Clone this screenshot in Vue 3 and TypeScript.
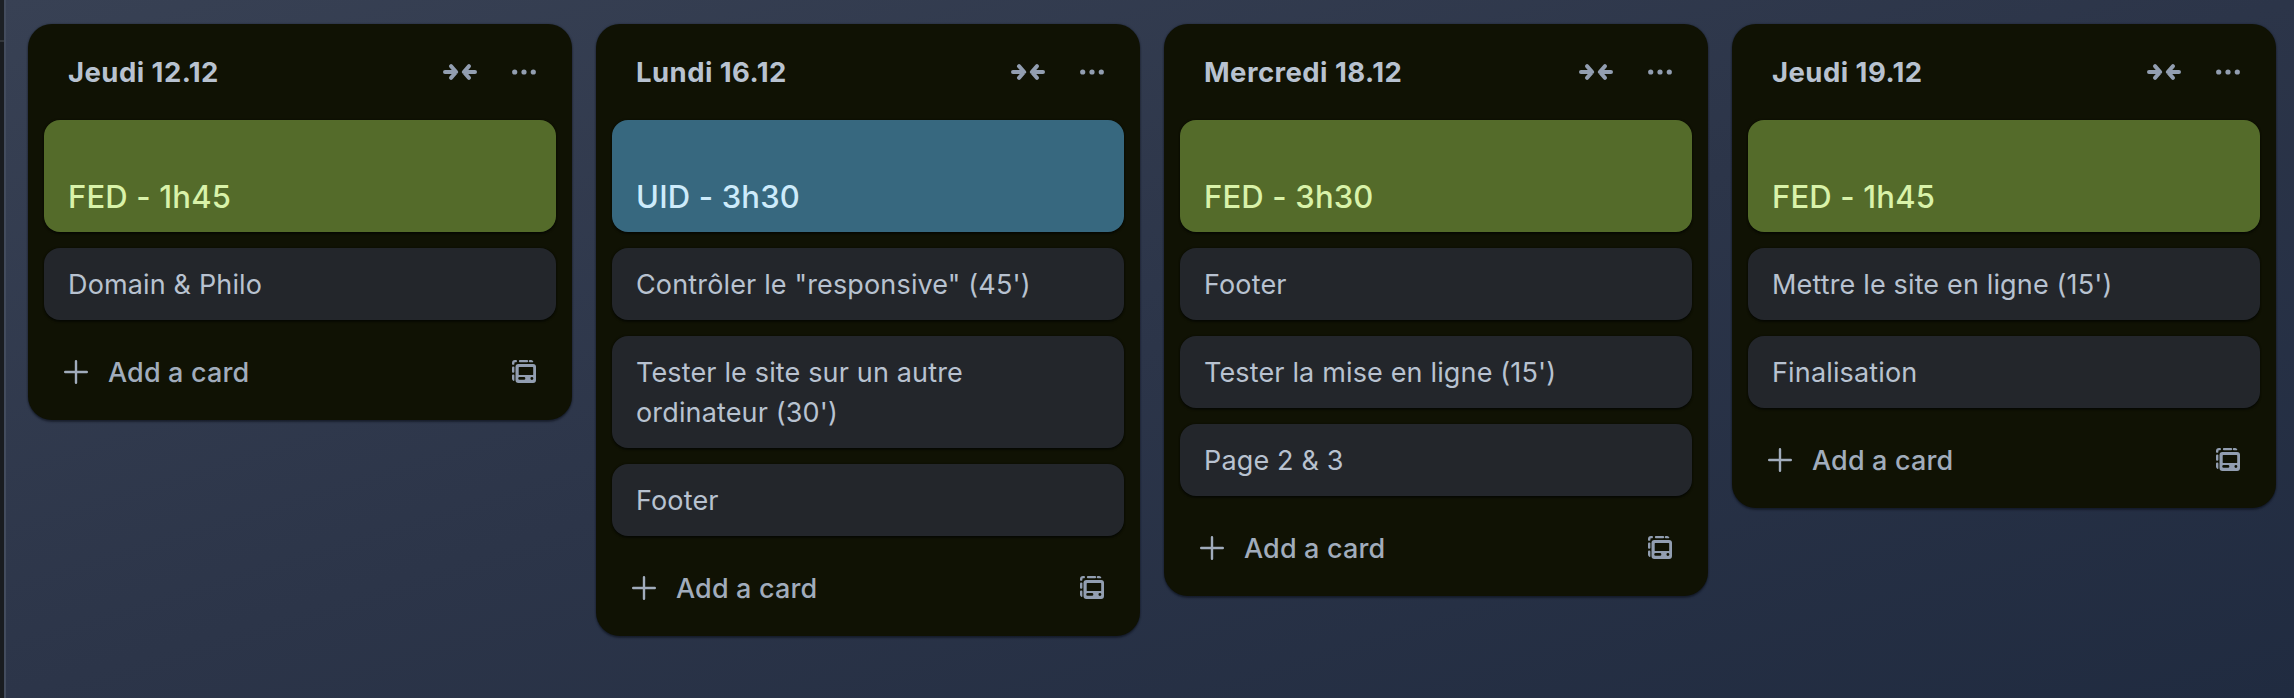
<script setup lang="ts">
interface Banner {
  label: string
  tone: 'lime' | 'sky'
}

interface BoardList {
  title: string
  banner: Banner
  cards: string[]
}

const lists: BoardList[] = [
  {
    title: 'Jeudi 12.12',
    banner: { label: 'FED - 1h45', tone: 'lime' },
    cards: ['Domain & Philo'],
  },
  {
    title: 'Lundi 16.12',
    banner: { label: 'UID - 3h30', tone: 'sky' },
    cards: ['Contrôler le "responsive" (45\')', "Tester le site sur un autre ordinateur (30')", 'Footer'],
  },
  {
    title: 'Mercredi 18.12',
    banner: { label: 'FED - 3h30', tone: 'lime' },
    cards: ['Footer', "Tester la mise en ligne (15')", 'Page 2 & 3'],
  },
  {
    title: 'Jeudi 19.12',
    banner: { label: 'FED - 1h45', tone: 'lime' },
    cards: ["Mettre le site en ligne (15')", 'Finalisation'],
  },
]
</script>

<template>
  <div class="app">
    <aside class="sidebar">
      <div class="sidebar-head"></div>
    </aside>
    <main class="board">
      <section v-for="list in lists" :key="list.title" class="list">
        <header class="list-head">
          <h2 class="list-title">{{ list.title }}</h2>
          <button class="icon-button" type="button" aria-label="Collapse list">
            <svg width="36" height="24" viewBox="0 0 36 24" fill="none" stroke="currentColor" stroke-width="4" stroke-linecap="round" stroke-linejoin="round">
              <path d="M3 12H14M9 6.2L14.2 12L9 17.8" />
              <path d="M33 12H22M27 6.2L21.8 12L27 17.8" />
            </svg>
          </button>
          <button class="icon-button" type="button" aria-label="List actions">
            <svg width="24" height="24" viewBox="0 0 24 24" fill="currentColor">
              <circle cx="2.7" cy="12" r="2.6" />
              <circle cx="12" cy="12" r="2.6" />
              <circle cx="21.3" cy="12" r="2.6" />
            </svg>
          </button>
        </header>

        <div class="cards">
          <article class="banner" :class="list.banner.tone">{{ list.banner.label }}</article>
          <article v-for="card in list.cards" :key="card" class="card">{{ card }}</article>
        </div>

        <footer class="list-foot">
          <button class="add" type="button">
            <svg width="24" height="24" viewBox="0 0 24 24" fill="none" stroke="currentColor" stroke-width="2.4" stroke-linecap="round">
              <path d="M12 1.2V22.8M1.2 12H22.8" />
            </svg>
            <span class="add-label">Add a card</span>
          </button>
          <button class="icon-button" type="button" aria-label="Create from template">
            <svg width="24" height="24" viewBox="0 0 24 24" fill="currentColor">
              <path d="M3 0H4.2A.7 .7 0 0 1 4.9 .7V1.6A.7 .7 0 0 1 4.2 2.3H3A.7 .7 0 0 0 2.4 3V4.1A.7 .7 0 0 1 1.7 4.8H.7A.7 .7 0 0 1 0 4.1V3A3 3 0 0 1 3 0Z" />
              <rect x="6.9" y="0" width="9.2" height="2.3" rx="1" />
              <path d="M17.9 0H19.2A2.3 2.3 0 0 1 21.3 1.5A.7 .7 0 0 1 20.7 2.3H17.9A.9 .9 0 0 1 17.9 0Z" />
              <rect x="0" y="6.6" width="2.4" height="6.1" rx="1" />
              <path d="M1 14.6H1.5A.9 .9 0 0 1 2.4 15.5V20.2A.7 .7 0 0 1 1.6 20.9A2.4 2.4 0 0 1 0 18.7V15.5A1 1 0 0 1 1 14.6Z" />
              <path
                fill-rule="evenodd"
                d="M6.4 3.9H21.1A2.9 2.9 0 0 1 24 6.8V20.1A2.9 2.9 0 0 1 21.1 23H6.4A2.9 2.9 0 0 1 3.5 20.1V6.8A2.9 2.9 0 0 1 6.4 3.9ZM7.3 6.9A.6 .6 0 0 0 6.7 7.5V14.5A.6 .6 0 0 0 7.3 15.1H20.6A.6 .6 0 0 0 21.2 14.5V7.5A.6 .6 0 0 0 20.6 6.9ZM7.6 17.1A1.35 1.35 0 0 0 7.6 19.8H12A1.35 1.35 0 0 0 12 17.1ZM19.9 17A1.45 1.45 0 1 0 19.9 19.9A1.45 1.45 0 1 0 19.9 17Z"
              />
            </svg>
          </button>
        </footer>
      </section>
    </main>
  </div>
</template>

<style>
html,
body {
  margin: 0;
  background: #2c3549;
}
</style>

<style scoped>
.app {
  display: flex;
  width: 100%;
  height: 100vh;
  overflow: hidden;
  background: linear-gradient(to bottom right, #384154, #2c3549 50%, #202b40);
  font-family: Inter, 'Open Sans', sans-serif;
  color: #b6c2cf;
}

.sidebar {
  box-sizing: border-box;
  flex: none;
  width: 6px;
  border-right: 2px solid #434c5e;
  background: #191c20;
}

.sidebar-head {
  height: 40px;
  border-bottom: 2px solid #32363b;
  background: #1c2025;
}

.board {
  display: flex;
  flex: 1;
  align-items: flex-start;
  gap: 24px;
  padding: 24px 18px 0 22px;
}

.list {
  box-sizing: border-box;
  flex: none;
  width: 544px;
  padding: 16px;
  border-radius: 24px;
  background: #101204;
  box-shadow: 0 2px 2px rgba(9, 14, 24, 0.5), 0 0 2px rgba(9, 14, 24, 0.5);
}

.list-head {
  display: flex;
  align-items: center;
  height: 64px;
  margin-bottom: 16px;
  padding: 0 20px 0 24px;
}

.list-title {
  flex: 1;
  margin: 0;
  font-size: 27.5px;
  font-weight: 650;
  line-height: 40px;
  letter-spacing: 0.45px;
  color: #b8c2d0;
}

.icon-button {
  display: flex;
  align-items: center;
  padding: 0;
  border: 0;
  background: none;
  color: #929eb1;
}

.icon-button + .icon-button {
  margin-left: 34px;
}

.cards {
  display: flex;
  flex-direction: column;
  gap: 16px;
}

.banner,
.card {
  padding: 17px 24px 15px;
  border-radius: 16px;
  line-height: 40px;
  box-shadow: 0 2px 2px rgba(1, 4, 4, 0.5), 0 0 2px rgba(1, 4, 4, 0.5);
}

.banner {
  padding-top: 57px;
  font-size: 31px;
  font-weight: 540;
  letter-spacing: 0.18px;
}

.banner.lime {
  background: #546b2a;
  color: #d9f2a9;
}

.banner.sky {
  background: #37687f;
  color: #cdebfb;
}

.card {
  background: #23262b;
  font-size: 27px;
  font-weight: 430;
  letter-spacing: 0.15px;
  color: #b8c2d0;
}

.list-foot {
  display: flex;
  align-items: center;
  justify-content: space-between;
  height: 72px;
  margin: 16px 0 -4px;
  padding: 0 20px;
}

.add {
  display: flex;
  align-items: center;
  gap: 20px;
  padding: 0;
  border: 0;
  background: none;
  font: 530 27px / 40px Inter, 'Open Sans', sans-serif;
  letter-spacing: 0.15px;
  color: #a1acbc;
}

.add-label {
  padding-top: 1px;
}
</style>
